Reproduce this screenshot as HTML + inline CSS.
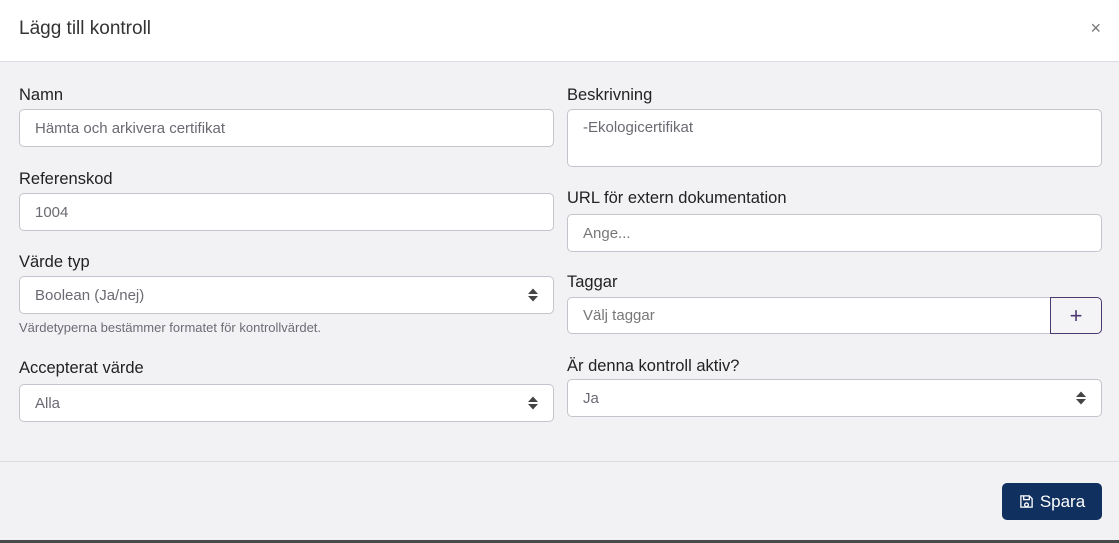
<!DOCTYPE html>
<html><head><style>
*{box-sizing:border-box;margin:0;padding:0}
body{width:1119px;height:543px;overflow:hidden;background:#f2f2f5;font-family:"Liberation Sans",sans-serif;position:relative}
.hdr{position:absolute;left:0;top:0;width:1119px;height:62px;background:#fff;border-bottom:1px solid #dcdce2}
.hdr h1{position:absolute;left:19px;top:18px;font-size:19px;font-weight:normal;color:#333}
.x{position:absolute;right:18px;top:18px;font-size:18px;color:#777}
.l{position:absolute;font-size:16.5px;color:#222}
.i{position:absolute;background:#fff;border:1px solid #c4c4cc;border-radius:5px;font-size:15px;color:#6a6a72;padding-left:15px;display:flex;align-items:center}
.i.ta{align-items:flex-start;padding-top:9px}
.arr{position:absolute;right:15px;top:50%;transform:translateY(-50%);width:10px;height:15px}
.help{position:absolute;left:19px;top:320px;font-size:13px;color:#6c6c75}
.ftr{position:absolute;left:0;top:461px;width:1119px;border-top:1px solid #dcdce2}
.btn{position:absolute;left:1002px;top:483px;width:100px;height:37px;background:#10305f;border-radius:5px;color:#fff;font-size:17px;display:flex;align-items:center;justify-content:center;gap:6px}
.plus{position:absolute;left:1050px;top:297px;width:52px;height:37px;border:1px solid #4a3a70;border-radius:0 5px 5px 0;background:#f4f4f7;color:#4a3a70;font-size:22px;display:flex;align-items:center;justify-content:center}
.bot{position:absolute;left:0;top:540px;width:1119px;height:3px;background:#4a4a4a}
</style></head><body>
<div class="hdr"><h1>Lägg till kontroll</h1><div class="x">×</div></div>
<div class="l" style="left:19px;top:86px">Namn</div>
<div class="i" style="left:19px;top:109px;width:535px;height:38px">Hämta och arkivera certifikat</div>
<div class="l" style="left:19px;top:170px">Referenskod</div>
<div class="i" style="left:19px;top:193px;width:535px;height:38px">1004</div>
<div class="l" style="left:19px;top:253px">Värde typ</div>
<div class="i" style="left:19px;top:276px;width:535px;height:38px">Boolean (Ja/nej)<svg class="arr" viewBox="0 0 10 15"><path d="M0 6.5L5 1L10 6.5Z M0 8.5L5 14L10 8.5Z" fill="#444"/></svg></div>
<div class="help">Värdetyperna bestämmer formatet för kontrollvärdet.</div>
<div class="l" style="left:19px;top:359px">Accepterat värde</div>
<div class="i" style="left:19px;top:384px;width:535px;height:38px">Alla<svg class="arr" viewBox="0 0 10 15"><path d="M0 6.5L5 1L10 6.5Z M0 8.5L5 14L10 8.5Z" fill="#444"/></svg></div>

<div class="l" style="left:567px;top:86px">Beskrivning</div>
<div class="i ta" style="left:567px;top:109px;width:535px;height:58px">-Ekologicertifikat</div>
<div class="l" style="left:567px;top:189px">URL för extern dokumentation</div>
<div class="i" style="left:567px;top:214px;width:535px;height:38px;color:#777">Ange...</div>
<div class="l" style="left:567px;top:273px">Taggar</div>
<div class="i" style="left:567px;top:297px;width:484px;height:37px;border-radius:5px 0 0 5px;color:#777">Välj taggar</div>
<div class="plus">+</div>
<div class="l" style="left:567px;top:357px">Är denna kontroll aktiv?</div>
<div class="i" style="left:567px;top:379px;width:535px;height:38px">Ja<svg class="arr" viewBox="0 0 10 15"><path d="M0 6.5L5 1L10 6.5Z M0 8.5L5 14L10 8.5Z" fill="#444"/></svg></div>

<div class="ftr"></div>
<div class="btn"><svg width="15" height="15" viewBox="0 0 16 16"><path d="M2 2h9l3 3v9H2z M5 2v4h6V2 M8 9.5a2 2 0 1 0 0.01 0" fill="none" stroke="#fff" stroke-width="1.4"/></svg>Spara</div>
<div class="bot"></div>
</body></html>
